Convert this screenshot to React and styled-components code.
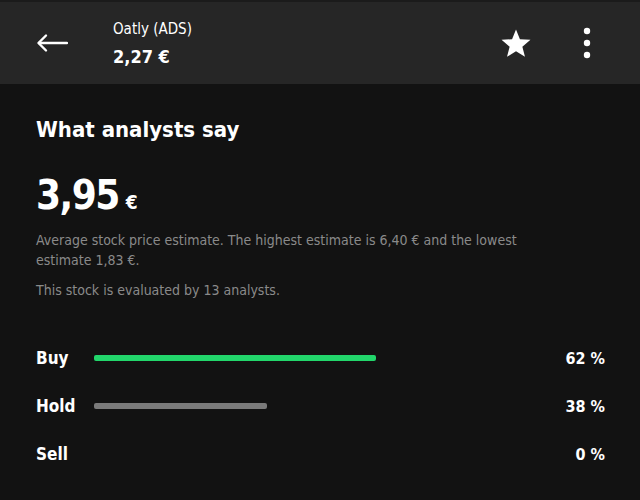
import React from "react";
import styled, { createGlobalStyle } from "styled-components";

const GlobalStyle = createGlobalStyle`
  html, body {
    margin: 0;
    padding: 0;
    background: #121212;
  }
  body {
    font-family: "DejaVu Sans Condensed", "Roboto", sans-serif;
    color: #ffffff;
  }
`;

const Page = styled.div`
  width: 640px;
  height: 500px;
  background: #121212;
  border-top: 2px solid #1b1b1b;
  box-sizing: border-box;
  overflow: hidden;
`;

const TopBar = styled.header`
  height: 82px;
  background: #262626;
  display: flex;
  align-items: center;
  padding: 0 41px 0 36px;
`;

const IconButton = styled.button`
  background: none;
  border: none;
  padding: 0;
  color: #fff;
  display: flex;
  align-items: center;
  justify-content: center;
  width: ${(p) => p.$w || 32}px;
  height: 40px;
  cursor: pointer;
`;

const TitleBlock = styled.div`
  flex: 1;
  margin-left: 45px;
  display: flex;
  flex-direction: column;
  gap: 8px;
`;

const Name = styled.div`
  font-size: 15px;
  font-weight: 500;
`;

const Price = styled.div`
  font-size: 18px;
  font-weight: 700;
`;

const Actions = styled.div`
  display: flex;
  align-items: center;
  gap: 43px;
`;

const Content = styled.main`
  padding: 33px 35px 0 36px;
`;

const Heading = styled.h1`
  margin: 0;
  font-size: 22px;
  font-weight: 700;
`;

const Estimate = styled.div`
  margin-top: 30px;
  display: flex;
  align-items: baseline;
  gap: 7px;
`;

const BigNumber = styled.span`
  font-size: 40px;
  font-weight: 700;
  letter-spacing: -1.5px;
`;

const Currency = styled.span`
  font-size: 19px;
  font-weight: 700;
`;

const Note = styled.p`
  margin: ${(p) => p.$mt || 0}px 0 0;
  font-size: 14px;
  line-height: 20px;
  color: #8a8a8a;
  max-width: 540px;
`;

const Ratings = styled.div`
  margin-top: 48px;
  display: flex;
  flex-direction: column;
  gap: 28px;
`;

const Row = styled.div`
  display: grid;
  grid-template-columns: 58px 455px 1fr;
  align-items: center;
  height: 20px;
`;

const Label = styled.span`
  font-size: 17px;
  font-weight: 700;
`;

const Track = styled.div`
  height: 6px;
`;

const Fill = styled.div`
  height: 100%;
  border-radius: 2px;
  background: ${(p) => p.$color};
`;

const Percent = styled.span`
  font-size: 16px;
  font-weight: 700;
  text-align: right;
`;

const ratings = [
  { label: "Buy", value: 62, color: "#22d66b" },
  { label: "Hold", value: 38, color: "#7a7a7a" },
  { label: "Sell", value: 0, color: "#7a7a7a" },
];

const App = () => {
  return (
    <>
      <GlobalStyle />
      <Page>
        <TopBar>
          <IconButton aria-label="Back">
            <svg width="32" height="20" viewBox="0 0 32 20" fill="none" stroke="#fff" strokeWidth="2.4" strokeLinecap="round" strokeLinejoin="round">
              <path d="M31 10H3" />
              <path d="M10 2.5L2.5 10l7.5 7.5" />
            </svg>
          </IconButton>
          <TitleBlock>
            <Name>Oatly (ADS)</Name>
            <Price>2,27 €</Price>
          </TitleBlock>
          <Actions>
            <IconButton aria-label="Favourite">
              <svg width="32" height="32" viewBox="0 0 24 24" fill="#fff">
                <path d="M12 1.8l2.95 7.35 7.9.5-6.07 5.07 1.95 7.68L12 18.2l-6.73 4.2 1.95-7.68-6.07-5.07 7.9-.5z" />
              </svg>
            </IconButton>
            <IconButton aria-label="More" $w={24}>
              <svg width="8" height="32" viewBox="0 0 8 32" fill="#fff">
                <circle cx="4" cy="4" r="3.2" />
                <circle cx="4" cy="16" r="3.2" />
                <circle cx="4" cy="28" r="3.2" />
              </svg>
            </IconButton>
          </Actions>
        </TopBar>
        <Content>
          <Heading>What analysts say</Heading>
          <Estimate>
            <BigNumber>3,95</BigNumber>
            <Currency>€</Currency>
          </Estimate>
          <Note $mt={12}>
            Average stock price estimate. The highest estimate is 6,40 € and the lowest estimate 1,83 €.
          </Note>
          <Note $mt={10}>This stock is evaluated by 13 analysts.</Note>
          <Ratings>
            {ratings.map((r) => (
              <Row key={r.label}>
                <Label>{r.label}</Label>
                <Track>
                  {r.value > 0 && <Fill $color={r.color} style={{ width: `${r.value}%` }} />}
                </Track>
                <Percent>{r.value} %</Percent>
              </Row>
            ))}
          </Ratings>
        </Content>
      </Page>
    </>
  );
};

export default App;
